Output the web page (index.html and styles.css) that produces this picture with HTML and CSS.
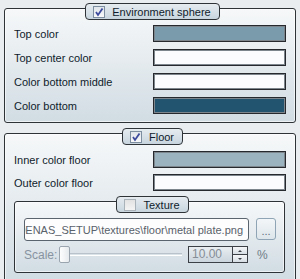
FILE: index.html
```html
<!DOCTYPE html>
<html lang="en">

<head>
    <meta charset="UTF-8">
    <title>Environment</title>
    <link rel="stylesheet" href="styles.css">
</head>

<body>
    <div class="panel">
        <!-- Environment sphere -->
        <div class="group">
            <div class="group-head">
                <span class="tag"><span class="check on"><svg viewBox="0 0 10 10"><polyline points="2,5 4,8 8.5,1.5"/></svg></span>Environment sphere</span>
            </div>
            <div class="rows">
                <span class="label">Top color</span><span class="swatch sky-top"></span>
                <span class="label">Top center color</span><span class="swatch white"></span>
                <span class="label">Color bottom middle</span><span class="swatch white"></span>
                <span class="label">Color bottom</span><span class="swatch sky-bottom"></span>
            </div>
        </div>

        <!-- Floor -->
        <div class="group floor">
            <div class="group-head">
                <span class="tag"><span class="check on"><svg viewBox="0 0 10 10"><polyline points="2,5 4,8 8.5,1.5"/></svg></span>Floor</span>
            </div>
            <div class="rows tight">
                <span class="label">Inner color floor</span><span class="swatch floor-inner"></span>
                <span class="label">Outer color floor</span><span class="swatch white"></span>
            </div>

            <div class="group texture">
                <div class="group-head">
                    <span class="tag"><span class="check off"></span>Texture</span>
                </div>
                <div class="path-row">
                    <div class="path"><span>DENAS_SETUP\textures\floor\metal plate.png</span></div>
                    <div class="browse">...</div>
                </div>
                <div class="scale-row">
                    <span class="scale-label">Scale:</span>
                    <div class="slider">
                        <span class="track"></span>
                        <span class="thumb"></span>
                    </div>
                    <div class="spin">
                        <span class="spin-value">10.00</span>
                        <span class="spin-btns">
                            <span class="up"></span>
                            <span class="down"></span>
                        </span>
                    </div>
                    <span class="unit">%</span>
                </div>
            </div>
        </div>
    </div>
</body>

</html>
```

FILE: styles.css
```css
/* Панель окружения */
body {
    margin: 0;
    height: 279px;
    overflow: hidden;
    background-color: #eaedef;
    font-family: "Liberation Sans", Arial, sans-serif;
    font-size: 11px;
    color: #101c2c;
}

.panel {
    padding: 8px 4px 0;
}

.group {
    border: 1px solid #2e3338;
    border-radius: 3px;
    background: linear-gradient(#f6f8f9, #d1dce3);
    box-shadow: inset 0 0 0 1px rgba(255, 255, 255, 0.6);
    padding: 0 9px 8px;
}

.floor {
    margin-top: 10px;
}

.group-head {
    display: flex;
    justify-content: center;
    margin-top: -6px;
    padding-left: 5px;
}

.tag {
    display: flex;
    align-items: center;
    gap: 7px;
    height: 15px;
    padding: 0 8px 0 7px;
    border: 1px solid #2e3338;
    border-radius: 4px;
    background: linear-gradient(#e6ecf0, #c8d5de);
}

.check {
    display: block;
    width: 12px;
    height: 12px;
    box-sizing: border-box;
    border: 1px solid #7d8ea0;
    background: linear-gradient(#dfe5ea, #f8f9fa);
}

.check svg {
    display: block;
    width: 10px;
    height: 10px;
}

.check polyline {
    fill: none;
    stroke: #3d4b9c;
    stroke-width: 1.8;
}

.check.off {
    border-color: #a9b1b9;
    background: linear-gradient(#e2e2e2, #f4f4f4);
}

/* Строки с цветами */
.rows {
    display: grid;
    grid-template-columns: 139px 1fr;
    grid-auto-rows: 17px;
    row-gap: 7px;
    align-items: center;
    padding-top: 5px;
}

.rows.tight {
    row-gap: 6px;
    padding-top: 6px;
}

.swatch {
    display: block;
    height: 17px;
    box-sizing: border-box;
    border: 1px solid #262a2e;
    box-shadow: inset 0 0 0 1px #7d868c;
}

.white {
    background-color: #fbfcfd;
}

.sky-top {
    background-color: #7a9bab;
}

.sky-bottom {
    background-color: #23546f;
}

.floor-inner {
    background-color: #9bb3bf;
}

/* Текстура */
.texture {
    margin-top: 10px;
    margin-right: 1px;
    padding: 0 8px 9px 9px;
}

.path-row {
    display: flex;
    gap: 7px;
    margin-top: 5px;
}

.path {
    display: flex;
    justify-content: flex-end;
    align-items: center;
    width: 225px;
    height: 23px;
    box-sizing: border-box;
    padding-right: 5px;
    overflow: hidden;
    white-space: nowrap;
    border: 1px solid #5a646e;
    border-radius: 3px;
    background-color: #fdfdfd;
    color: #59616a;
    font-size: 11px;
}

.browse {
    display: flex;
    justify-content: center;
    align-items: center;
    width: 20px;
    height: 22px;
    box-sizing: border-box;
    padding-top: 3px;
    border: 1px solid #8fa5b5;
    border-radius: 3px;
    background: linear-gradient(#f3f6f8, #dde6eb);
    color: #5b6d7b;
}

.scale-row {
    display: flex;
    align-items: center;
    height: 17px;
    margin-top: 5px;
}

.scale-label {
    width: 35px;
    color: #8793a0;
    font-size: 12px;
}

.slider {
    display: grid;
    width: 123px;
    height: 17px;
}

.slider > span {
    grid-area: 1 / 1;
}

.track {
    align-self: center;
    height: 1px;
    border-top: 1px solid #b9c2ca;
    border-bottom: 1px solid #ffffff;
    margin-left: 2px;
}

.thumb {
    justify-self: start;
    width: 11px;
    height: 17px;
    box-sizing: border-box;
    border: 1px solid #9aa4ae;
    border-radius: 2px;
    background: linear-gradient(90deg, #fdfdfd, #e6eaed);
}

.spin {
    display: flex;
    width: 60px;
    height: 17px;
    box-sizing: border-box;
    margin-left: 6px;
    border: 1px solid #3a4046;
    background: linear-gradient(#e9eef1, #cbd5dd);
}

.spin-value {
    flex: 1;
    padding-left: 3px;
    line-height: 15px;
    color: #858d95;
    font-size: 12px;
}

.spin-btns {
    display: flex;
    flex-direction: column;
    width: 14px;
    border-left: 1px solid #3a4046;
}

.spin-btns span {
    flex: 1;
    display: flex;
    justify-content: center;
    align-items: center;
    background: linear-gradient(#f4f6f8, #d6dee4);
}

.spin-btns .up {
    border-bottom: 1px solid #3a4046;
}

.spin-btns .up::after,
.spin-btns .down::after {
    content: "";
    border-left: 2px solid transparent;
    border-right: 2px solid transparent;
}

.spin-btns .up::after {
    border-bottom: 2px solid #3a4046;
}

.spin-btns .down::after {
    border-top: 2px solid #3a4046;
}

.unit {
    margin-left: 9px;
    color: #6f7b87;
    font-size: 12px;
}
```
